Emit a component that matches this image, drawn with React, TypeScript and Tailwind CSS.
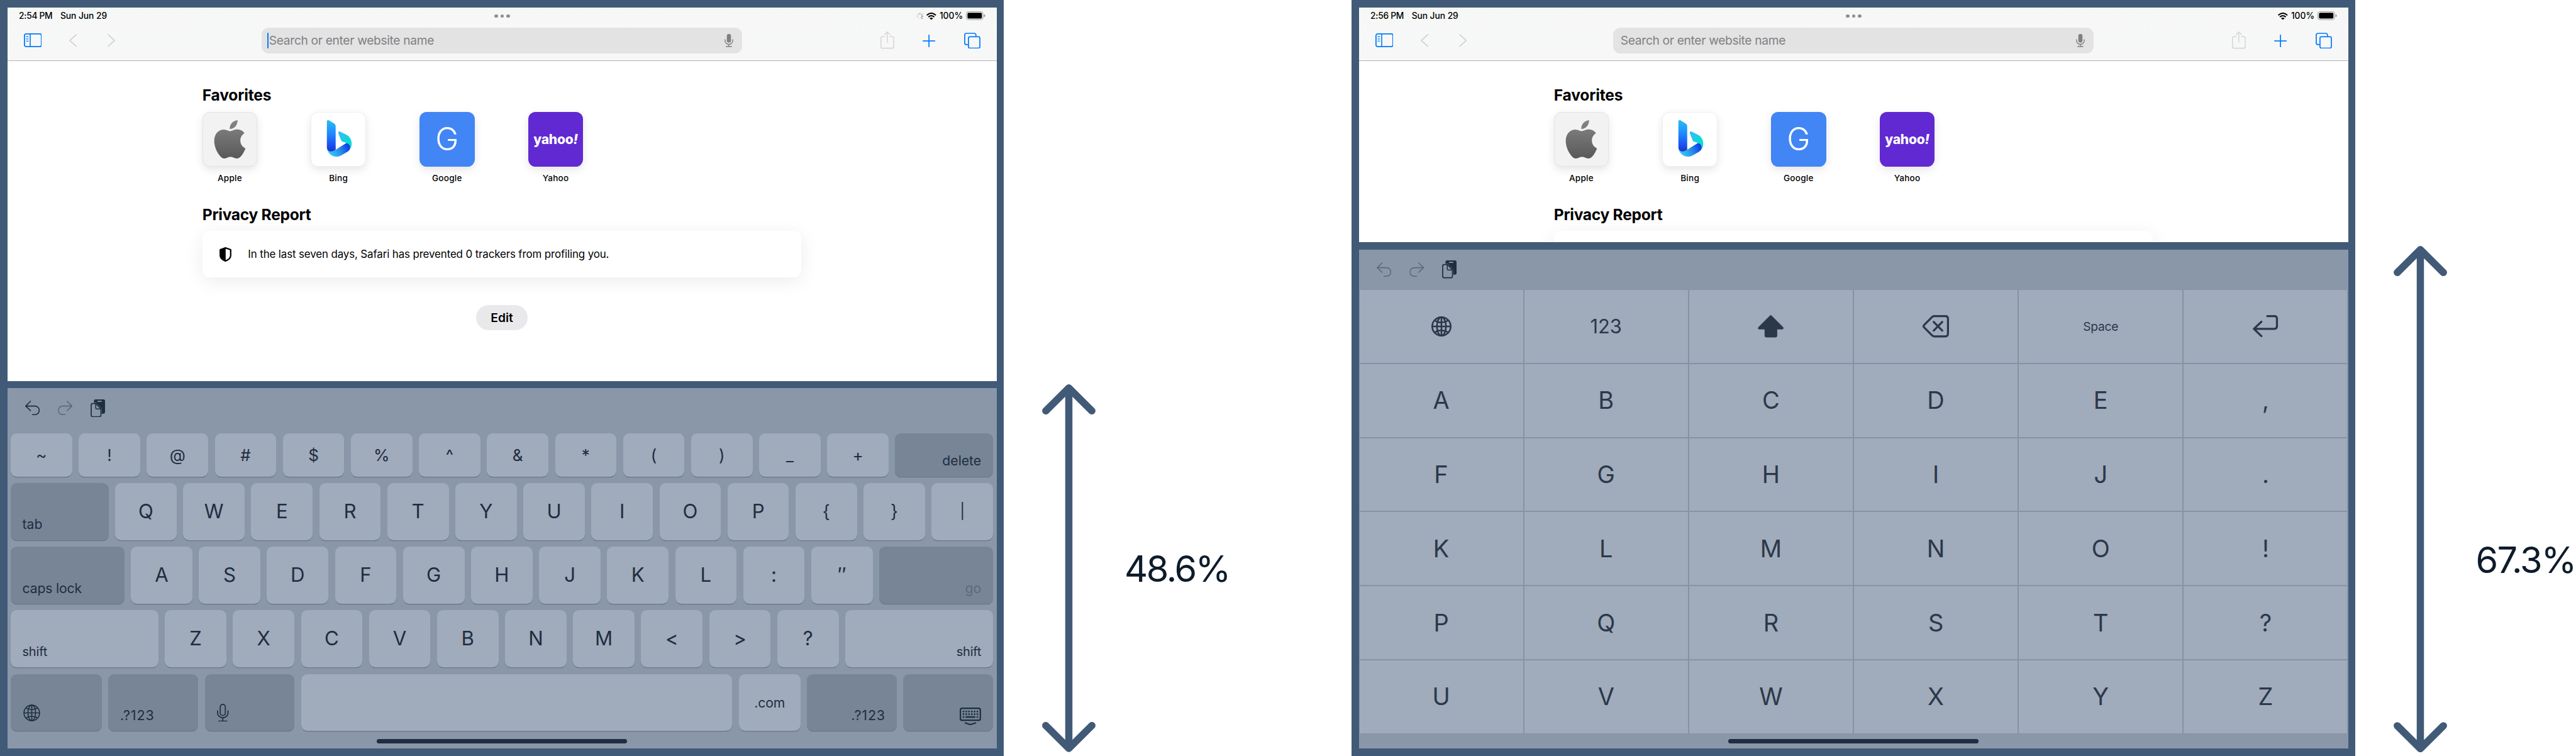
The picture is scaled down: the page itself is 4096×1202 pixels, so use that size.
import React from "react";

type Key = { label?: React.ReactNode; kind?: "letter" | "symbol" | "corner"; dark?: boolean; width?: string; align?: string; muted?: boolean };

function SidebarIcon() {
  return (
    <svg className="h-[22px] w-[28.8px]" viewBox="0 0 28.8 22" fill="none" stroke="#007aff" strokeLinecap="round">
      <rect x="0.9" y="0.9" width="27" height="20.2" rx="2.6" strokeWidth="1.8" />
      <path d="M10 1v20" strokeWidth="1.6" />
      <path d="M4 5.4h2.8M4 8.9h2.8M4 12.4h2.8" strokeWidth="1.3" />
    </svg>
  );
}

function Chevron({ flip }: { flip?: boolean }) {
  return (
    <svg className={flip ? "h-[20.6px] w-[12.2px] -scale-x-100" : "h-[20.6px] w-[12.2px]"} viewBox="0 0 12.2 20.6" fill="none" stroke="#d0d0d1" strokeWidth="1.7" strokeLinecap="round" strokeLinejoin="round">
      <path d="M11.3 0.9 1 10.3l10.3 9.4" />
    </svg>
  );
}

function ShareIcon() {
  return (
    <svg className="-mt-px h-[27.4px] w-[21.7px]" viewBox="519 202 113 143" fill="none" stroke="#d6d6d6" strokeWidth="8" strokeLinecap="round" strokeLinejoin="round">
      <path d="M556 245h-20q-13 0-13 13v70q0 13 13 13h80q13 0 13-13v-70q0-13-13-13h-20" strokeLinecap="butt" />
      <path d="M575 292v-85M552 228l23-22 23 22" />
    </svg>
  );
}

function PlusIcon() {
  return (
    <svg className="mt-0.5 h-[20.2px] w-[20.2px]" viewBox="867 225 105 105" fill="none" stroke="#007aff" strokeWidth="9" strokeLinecap="round">
      <path d="M919.500 229.500v96M871.500 277.500h96" />
    </svg>
  );
}

function TabsIcon() {
  return (
    <svg className="h-[25.4px] w-[25.9px]" viewBox="1206 210 135 132" fill="none" stroke="#007aff" strokeWidth="9">
      <rect x="1242" y="243.500" width="94.500" height="94" rx="12" />
      <path d="M1304 238v-9q0-14-14-14h-65q-14 0-14 14v65q0 14 14 14h12" />
    </svg>
  );
}

function MicFilled() {
  return (
    <svg className="h-[20.8px] w-[13.9px]" viewBox="0 0 13.9 20.8" fill="none" stroke="#7f7f84" strokeLinecap="round">
      <rect x="3.7" y="0" width="6.600" height="13.800" rx="3.300" fill="#7f7f84" stroke="none" />
      <path d="M0.800 9v1.800a6.150 5.700 0 0 0 12.300 0V9M6.950 16.500v3.400M2.700 20h8.500" strokeWidth="1.400" />
    </svg>
  );
}

const spokes = [
  ["M843 44v13", "#7e7e7e"],
  ["M863 52l-9 9", "#555"],
  ["M871 72h-13", "#222"],
  ["M863 92l-9-9", "#000"],
  ["M843 100V87", "#e2e2e2"],
  ["M823 92l9-9", "#cfcfcf"],
  ["M815 72h13", "#b5b5b5"],
  ["M823 52l9 9", "#999"],
];

function Spinner() {
  return (
    <svg className="mr-[5px] h-[11.5px] w-[11.5px]" viewBox="813 42 60 60" strokeWidth="4.500" strokeLinecap="round">
      {spokes.map(([d, c]) => (
        <path key={d} d={d} stroke={c} />
      ))}
    </svg>
  );
}

function Wifi() {
  return (
    <svg className="h-[11.5px] w-[15.7px]" viewBox="899 42 82 60" fill="none" stroke="#000" strokeWidth="10">
      <path d="M902 64q38-34 76 0M915 78q25-21 50 0" />
      <path d="M925 90q15-13 30 0l-15 12z" fill="#000" stroke="none" />
    </svg>
  );
}

function Battery() {
  return (
    <svg className="h-[13.8px] w-[30.5px]" viewBox="1227 36 159 72">
      <rect x="1229.500" y="38.500" width="139" height="67" rx="17" fill="none" stroke="#999" strokeWidth="5" />
      <rect x="1239" y="48" width="120" height="48" rx="9" />
      <path d="M1377 60q9 3 9 12t-9 12z" fill="#888" />
    </svg>
  );
}

function Undo({ flip, muted }: { flip?: boolean; muted?: boolean }) {
  return (
    <svg className={flip ? "h-[23.2px] w-[23.3px] -scale-x-100" : "h-[23.2px] w-[23.3px]"} viewBox="57 51 121 121" fill="none" stroke={muted ? "#5c6a7d" : "#1f2d40"} strokeWidth="8.500" strokeLinecap="round" strokeLinejoin="round">
      <path d="M101 56 61 96l40 38M62 96h74c50 0 50 71 0 71h-18" />
    </svg>
  );
}

function Clipboard() {
  return (
    <svg className="h-[28.4px] w-[23.1px]" viewBox="600 38 120 148">
      <path d="M628 66V52q0-14 14-14h64q14 0 14 14v90q0 15-14 15h-14v-42l-44-48z" fill="#1f2d40" />
      <rect x="656" y="50" width="37" height="9" rx="4.500" fill="#8a97a8" />
      <path d="M617 72.500h28l41 44v52q0 13-13 13h-56q-12 0-12-13V85q0-12.500 12-12.500z" fill="#8a97a8" stroke="#1f2d40" strokeWidth="9" />
      <path d="M643 74v37q0 7 7 7h37" fill="none" stroke="#1f2d40" strokeWidth="8" />
    </svg>
  );
}

function Globe({ className, stroke, width }: { className: string; stroke: string; width: number }) {
  return (
    <svg className={className} viewBox="0 0 32 32" fill="none" stroke={stroke} strokeWidth={width}>
      <circle cx="16" cy="16" r="14.700" />
      <ellipse cx="16" cy="16" rx="7.200" ry="14.700" />
      <path d="M16 1.300v29.400M1.300 16h29.400M5 6.500q11 6.500 22 0M5 25.500q11-6.500 22 0" />
    </svg>
  );
}

function MicOutline() {
  return (
    <svg className="h-[28.5px] w-[18.5px]" viewBox="0 0 18.5 28.5" fill="none" stroke="#1f2d40" strokeWidth="1.700" strokeLinecap="round">
      <rect x="5.200" y="0.900" width="8.100" height="17.600" rx="4.050" />
      <path d="M0.900 11v3.200a8.350 8 0 0 0 16.700 0V11M9.250 22.200v5.200M2.900 27.500h12.700" />
    </svg>
  );
}

function HideKeyboard() {
  return (
    <svg className="h-[28.1px] w-[33.9px]" viewBox="0 0 33.9 28.1" fill="none" stroke="#1f2d40">
      <rect x="1.100" y="1.100" width="31.700" height="19.100" rx="2.800" strokeWidth="2.200" />
      <path d="M4.800 6.300h24.500M4.800 10.600h24.500" strokeWidth="2.500" strokeDasharray="2.500 1.900" />
      <path d="M4.800 15h2.500M9.200 15h15.600M26.800 15h2.500" strokeWidth="2.500" />
      <path d="M8.900 24.500l8.100 2.500 8.100-2.500" strokeWidth="2.200" strokeLinecap="round" strokeLinejoin="round" />
    </svg>
  );
}

function ShiftArrow() {
  return (
    <svg className="h-[35.5px] w-[41.2px]" viewBox="0 0 41.2 35.5" fill="#2b3849">
      <path d="M19.300 0.700q1.300-1.200 2.600 0l18.500 18.500q1.600 3.200-1.600 3.600h-7.900v9.700q0 3-3 3H13.800q-3 0-3-3v-9.700H2.500q-3.400-.4-1.700-3.600z" />
    </svg>
  );
}

function Backspace() {
  return (
    <svg className="h-[35.4px] w-[42px]" viewBox="0 0 42 35.4" fill="none" stroke="#2b3849" strokeWidth="3.200" strokeLinecap="round" strokeLinejoin="round">
      <path d="M18.500 1.600h17.700q4.200 0 4.200 4.200v23.800q0 4.200-4.200 4.200H18.500q-2 0-3.500-1.600L2.300 19.400q-1.500-1.700 0-3.400L15 3.200q1.500-1.600 3.500-1.600z" />
      <path d="M17.700 10.800l13.600 13.800M31.300 10.800 17.700 24.600" />
    </svg>
  );
}

function ReturnArrow() {
  return (
    <svg className="h-[35px] w-[40.2px]" viewBox="0 0 40.2 35" fill="none" stroke="#2b3849" strokeWidth="3.200" strokeLinecap="round" strokeLinejoin="round">
      <path d="M23 1.600h11.500q4 0 4 4v12.200q0 4-4 4H2M13.800 10.500 1.800 21.800l12 11.500" />
    </svg>
  );
}

function AppleLogo() {
  return (
    <svg className="h-[61px] w-[61px]" viewBox="0 0 24 24">
      <defs>
        <linearGradient id="apple" x1="0" y1="0" x2="0" y2="1">
          <stop offset="0" stopColor="#858585" />
          <stop offset="1" stopColor="#595959" />
        </linearGradient>
      </defs>
      <path fill="url(#apple)" d="M12.152 6.896c-.948 0-2.415-1.078-3.960-1.040-2.040.027-3.910 1.183-4.961 3.014-2.117 3.675-.546 9.103 1.519 12.090 1.013 1.454 2.208 3.090 3.792 3.039 1.520-.065 2.090-.987 3.935-.987 1.831 0 2.350.987 3.960.948 1.637-.026 2.676-1.480 3.676-2.948 1.156-1.688 1.636-3.325 1.662-3.415-.039-.013-3.182-1.221-3.220-4.857-.026-3.040 2.480-4.494 2.597-4.559-1.429-2.090-3.623-2.324-4.390-2.376-2-.156-3.675 1.090-4.610 1.090zM15.530 3.830c.843-1.012 1.400-2.427 1.245-3.830-1.207.052-2.662.805-3.532 1.818-.780.896-1.454 2.338-1.273 3.714 1.338.104 2.715-.688 3.559-1.701" />
    </svg>
  );
}

function BingLogo() {
  return (
    <svg className="h-[87px] w-[87px]" viewBox="59 58 452 452">
      <defs>
        <linearGradient id="bingStem" x1="0" y1="0" x2="0" y2="1">
          <stop offset="0" stopColor="#2bbcf2" />
          <stop offset="0.400" stopColor="#1f8dff" />
          <stop offset="0.800" stopColor="#1b4ff0" />
          <stop offset="1" stopColor="#1a35c4" />
        </linearGradient>
        <linearGradient id="bingBase" gradientUnits="userSpaceOnUse" x1="215" y1="410" x2="380" y2="325">
          <stop offset="0" stopColor="#37c6fc" />
          <stop offset="0.450" stopColor="#2a93e6" />
          <stop offset="0.800" stopColor="#1453f0" />
          <stop offset="1" stopColor="#0f35cc" />
        </linearGradient>
        <linearGradient id="bingWing" gradientUnits="userSpaceOnUse" x1="290" y1="220" x2="385" y2="310">
          <stop offset="0" stopColor="#3db7ff" />
          <stop offset="0.650" stopColor="#12d4dd" />
          <stop offset="1" stopColor="#02e0d4" />
        </linearGradient>
      </defs>
      <path fill="url(#bingBase)" d="M190 345c4 35 45 42 74 26l91-56c20 3 32 18 32 38 0 16-9 27-23 35l-50 30c-52 30-121 3-124-73z" />
      <path fill="url(#bingStem)" d="M190 132c0-8 9-12 17-8l43 26c9 6 14 15 14 26v196c-33 23-74 18-74-22z" />
      <path fill="url(#bingWing)" d="M286 232c-2-9 5-17 15-13l54 27c28 15 44 43 44 76 0 21-7 38-18 50 12-28 3-51-26-57l-33-11c-6-2-10-6-12-11z" />
    </svg>
  );
}

function Favorite({ name, tile, children }: { name: string; tile: string; children: React.ReactNode }) {
  return (
    <div className="flex w-[87.4px] flex-col items-center">
      <div className={"flex h-[87.4px] w-[87.4px] items-center justify-center rounded-[11.5px] shadow-[0_5px_14px_rgba(0,0,0,0.1)] " + tile}>{children}</div>
      <div className="mt-[10.3px] text-[13.5px] leading-4 font-medium tracking-[0.25px] text-black">{name}</div>
    </div>
  );
}

function Browser({ time, loading, caret, full, size }: { time: string; loading?: boolean; caret?: boolean; full?: boolean; size: string }) {
  return (
    <section className={"overflow-hidden bg-white " + size}>
      <header className="h-[85.5px] border-b border-[#b2b2b2] bg-[#f7f7f7] bg-linear-to-b from-[#f6f8f6] to-[#f7f7f8]">
        <div className="grid h-[27.8px] grid-cols-[1fr_auto_1fr] items-center pr-[17.7px] pl-[18.6px] text-[13.8px] font-medium text-black">
          <div className="flex gap-[12.6px]">
            <span className="tracking-[-0.3px]">{time}</span>
            <span className="tracking-[-0.05px]">Sun Jun 29</span>
          </div>
          <div className="flex gap-[3.8px]">
            <i className="size-[5.5px] rounded-full bg-[#8d8e8d]" />
            <i className="size-[5.5px] rounded-full bg-[#8d8e8d]" />
            <i className="size-[5.5px] rounded-full bg-[#8d8e8d]" />
          </div>
          <div className="flex items-center justify-end">
            {loading && <Spinner />}
            <Wifi />
            <span className="mr-[5.2px] ml-[4.8px]">100%</span>
            <Battery />
          </div>
        </div>
        <div className="grid h-[50.2px] grid-cols-[1fr_764.3px_1fr] items-center">
          <div className="flex items-center pl-[26px]">
            <SidebarIcon />
            <div className="ml-[44.2px] flex gap-[48.5px]">
              <Chevron />
              <Chevron flip />
            </div>
          </div>
          <div className="flex h-[41.6px] items-center rounded-[11.5px] bg-[#e3e3e3] pr-[14.4px] pl-[9px]">
            <div className={caret ? "h-[25px] w-[2px] rounded-full bg-[#0a7aff]" : "h-[25px] w-[2px]"} />
            <span className="flex-1 pl-px text-[19.2px] tracking-[-0.33px] text-[#808083]">Search or enter website name</span>
            <MicFilled />
          </div>
          <div className="flex items-center justify-end gap-[45.2px] pr-[25.9px]">
            <ShareIcon />
            <PlusIcon />
            <TabsIcon />
          </div>
        </div>
      </header>
      <main className="mx-auto w-[952.5px] pt-[39.1px] text-black">
        <h2 className="text-[24.6px] leading-[30px] font-bold tracking-[-0.2px]">Favorites</h2>
        <div className="mt-[11.6px] flex gap-[85.3px]">
          <Favorite name="Apple" tile="border border-[#e4e4e4] bg-[#f2f2f2]">
            <AppleLogo />
          </Favorite>
          <Favorite name="Bing" tile="border border-[#efefef] bg-white">
            <BingLogo />
          </Favorite>
          <Favorite name="Google" tile="bg-[#4285f4]">
            <span className="text-[50px] leading-none font-light text-white">G</span>
          </Favorite>
          <Favorite name="Yahoo" tile="bg-[#6029d2]">
            <span className="text-[21px] leading-none font-extrabold tracking-[-0.2px] text-white">
              yahoo<i>!</i>
            </span>
          </Favorite>
        </div>
        <h2 className="mt-[34.8px] text-[24.6px] leading-[30px] font-bold tracking-[-0.3px]">Privacy Report</h2>
        <div className="mt-[11.2px] flex h-[74px] items-center rounded-[11.5px] bg-white pl-[27.2px] shadow-[0_6px_30px_rgba(0,0,0,0.08)]">
          {full && (
            <>
              <svg className="h-[23.2px] w-[19px]" viewBox="0 0 19 23.2">
                <path d="M9.500 1.100 17.800 4v9.300c0 4.200-3.700 6.900-8.300 8.800-4.600-1.900-8.300-4.600-8.300-8.800V4z" fill="none" stroke="#000" strokeWidth="2.200" strokeLinejoin="round" />
                <path d="M9.800 1 1.200 4v9.300c0 4.200 3.700 6.900 8.600 8.900z" />
              </svg>
              <span className="ml-[26.4px] text-[16.9px] tracking-[-0.12px]">In the last seven days, Safari has prevented 0 trackers from profiling you.</span>
            </>
          )}
        </div>
        {full && (
          <div className="mx-auto mt-[44px] flex h-[39.3px] w-[81.7px] items-center justify-center rounded-full bg-[#e9e9eb] text-[19.2px] font-semibold">Edit</div>
        )}
      </main>
    </section>
  );
}

function EditBar({ undoMuted }: { undoMuted?: boolean }) {
  return (
    <div className="flex h-[63.4px] shrink-0 items-center pl-[28.2px]">
      <Undo muted={undoMuted} />
      <div className="ml-[28.6px]">
        <Undo flip muted />
      </div>
      <div className="ml-[28.9px]">
        <Clipboard />
      </div>
    </div>
  );
}

function KeyCap({ label, kind = "letter", dark, width = "w-[97.7px]", align = "items-center justify-center", muted }: Key) {
  const type = kind === "letter" ? "text-[31.2px]" : kind === "symbol" ? "text-[26px]" : "text-[21.2px] leading-6";
  return (
    <div className={["flex h-full rounded-[9.5px]", "shadow-[0_1.2px_0_#6a7888]", dark ? "bg-[#778597]" : "bg-[#a0abbb]", muted ? "text-[#5c6a7d]" : "text-[#1f2d40]", width, align, type].join(" ")}>
      {label}
    </div>
  );
}

function KeyRow({ short, children }: { short?: boolean; children: React.ReactNode }) {
  return <div className={short ? "flex h-[68.1px] gap-[10.5px]" : "flex h-[90.8px] gap-[10.5px]"}>{children}</div>;
}

const letters = (chars: string, kind: "letter" | "symbol" = "letter") => [...chars].map((c) => <KeyCap key={c} label={c} kind={kind} />);

const bottomLeft = "items-end justify-start pl-[18.5px] pb-[13.4px]";
const bottomRight = "items-end justify-end pr-[18.8px] pb-[13.4px]";

function QwertyKeyboard() {
  return (
    <section className="flex h-[573.3px] flex-col bg-[#8a97a8]">
      <EditBar />
      <div className="mt-[8.9px] flex flex-col gap-[10.4px] px-[5.5px]">
        <KeyRow short>
          {letters("~!@#$%^&*()_+", "symbol")}
          <KeyCap kind="corner" dark width="flex-1" align={bottomRight} label="delete" />
        </KeyRow>
        <KeyRow>
          <KeyCap kind="corner" dark width="flex-1" align={bottomLeft} label="tab" />
          {letters("QWERTYUIOP")}
          <KeyCap label={<span className="text-[28px]">{"{"}</span>} />
          <KeyCap label={<span className="text-[28px]">{"}"}</span>} />
          <KeyCap label={<span className="text-[24px]">|</span>} />
        </KeyRow>
        <KeyRow>
          <KeyCap kind="corner" dark width="flex-1" align={bottomLeft} label={<span className="tracking-[-0.15px]">caps lock</span>} />
          {letters("ASDFGHJKL:″")}
          <KeyCap kind="corner" dark muted width="flex-1" align={bottomRight} label="go" />
        </KeyRow>
        <KeyRow>
          <KeyCap kind="corner" width="flex-1" align={bottomLeft} label={<span className="text-[20px] tracking-[-0.2px]">shift</span>} />
          {letters("ZXCVBNM<>?")}
          <KeyCap kind="corner" width="flex-1" align={bottomRight} label={<span className="text-[20px] tracking-[-0.2px]">shift</span>} />
        </KeyRow>
        <KeyRow>
          <KeyCap dark width="w-[144.9px]" align="items-end pl-[19.5px] pb-[15px]" label={<Globe className="size-[27px]" stroke="#1f2d40" width={1.9} />} />
          <KeyCap kind="corner" dark width="w-[142.7px]" align={bottomLeft} label={<span className="text-[21.6px] tracking-[0.8px]">.?123</span>} />
          <KeyCap dark width="w-[142.7px]" align="items-end pl-[19.5px] pb-[15px]" label={<MicOutline />} />
          <KeyCap width="flex-1" />
          <KeyCap kind="corner" label={<span className="tracking-[-0.1px]">.com</span>} />
          <KeyCap kind="corner" dark width="w-[142.7px]" align={bottomRight} label={<span className="-mr-px text-[21.6px] tracking-[0.8px]">.?123</span>} />
          <KeyCap dark width="w-[142.7px]" align="items-end justify-end pr-[19.5px] pb-[9.7px]" label={<HideKeyboard />} />
        </KeyRow>
      </div>
      <HomeBar />
    </section>
  );
}

function HomeBar() {
  return <div className="mx-auto mt-auto mb-[8.5px] h-[6.5px] w-[397.3px] rounded-full bg-[#1f2d40]" />;
}

const gridKeys: React.ReactNode[] = [
  <Globe className="size-8" stroke="#2b3849" width={2.6} />,
  <span className="text-[30.8px]">123</span>,
  <ShiftArrow />,
  <Backspace />,
  <span className="text-[19.2px] tracking-[-0.25px]">Space</span>,
  <ReturnArrow />,
  ..."ABCDE,FGHIJ.KLMNO!PQRST?UVWXYZ",
];

function GridKeyboard() {
  return (
    <section className="flex h-[793.8px] flex-col bg-[#8a97a8]">
      <EditBar undoMuted />
      <div className="grid h-[706.8px] grid-cols-6 grid-rows-6">
        {gridKeys.map((k, i) => (
          <div key={i} className="flex items-center justify-center border border-[#8593a3] bg-[#a0abbb] text-[38px] text-[#2b3849]">
            {k}
          </div>
        ))}
      </div>
      <HomeBar />
    </section>
  );
}

function Device({ children }: { children: React.ReactNode }) {
  return <div className="flex h-[1202px] w-[1596px] shrink-0 flex-col gap-[11.5px] bg-[#415a77] p-[11.5px]">{children}</div>;
}

function HeightArrow({ height }: { height: number }) {
  const end = height - 5.8;
  return (
    <svg className="mb-[5.8px] ml-[61.2px] shrink-0 self-end" width="85" height={height} viewBox={`0 0 85 ${height}`} fill="none" stroke="#415a77" strokeWidth="11.5" strokeLinecap="round" strokeLinejoin="round">
      <path d={`M42.5 5.8V${end}M5.8 42.3 42.5 5.8l36.7 36.5M5.8 ${end - 36.5} 42.5 ${end}l36.7-36.500`} />
    </svg>
  );
}

export default function App() {
  return (
    <div className="flex h-[1202px] w-[4096px] overflow-hidden bg-white font-['Inter',sans-serif]">
      <div className="flex w-[2149px] shrink-0">
        <Device>
          <Browser time="2:54 PM" loading caret full size="h-[594.2px]" />
          <QwertyKeyboard />
        </Device>
        <HeightArrow height={584.8} />
        <div className="mt-[868.6px] ml-[45.8px] text-[57.6px] leading-[70px] tracking-[-2.4px] text-[#0d1b2a]">48.6%</div>
      </div>
      <div className="flex w-[1947px] shrink-0">
        <Device>
          <Browser time="2:56 PM" size="h-[373.7px]" />
          <GridKeyboard />
        </Device>
        <HeightArrow height={805.2} />
        <div className="mt-[854.8px] ml-[45.4px] text-[57.6px] leading-[70px] tracking-[-1.9px] text-[#0d1b2a]">67.3%</div>
      </div>
    </div>
  );
}
